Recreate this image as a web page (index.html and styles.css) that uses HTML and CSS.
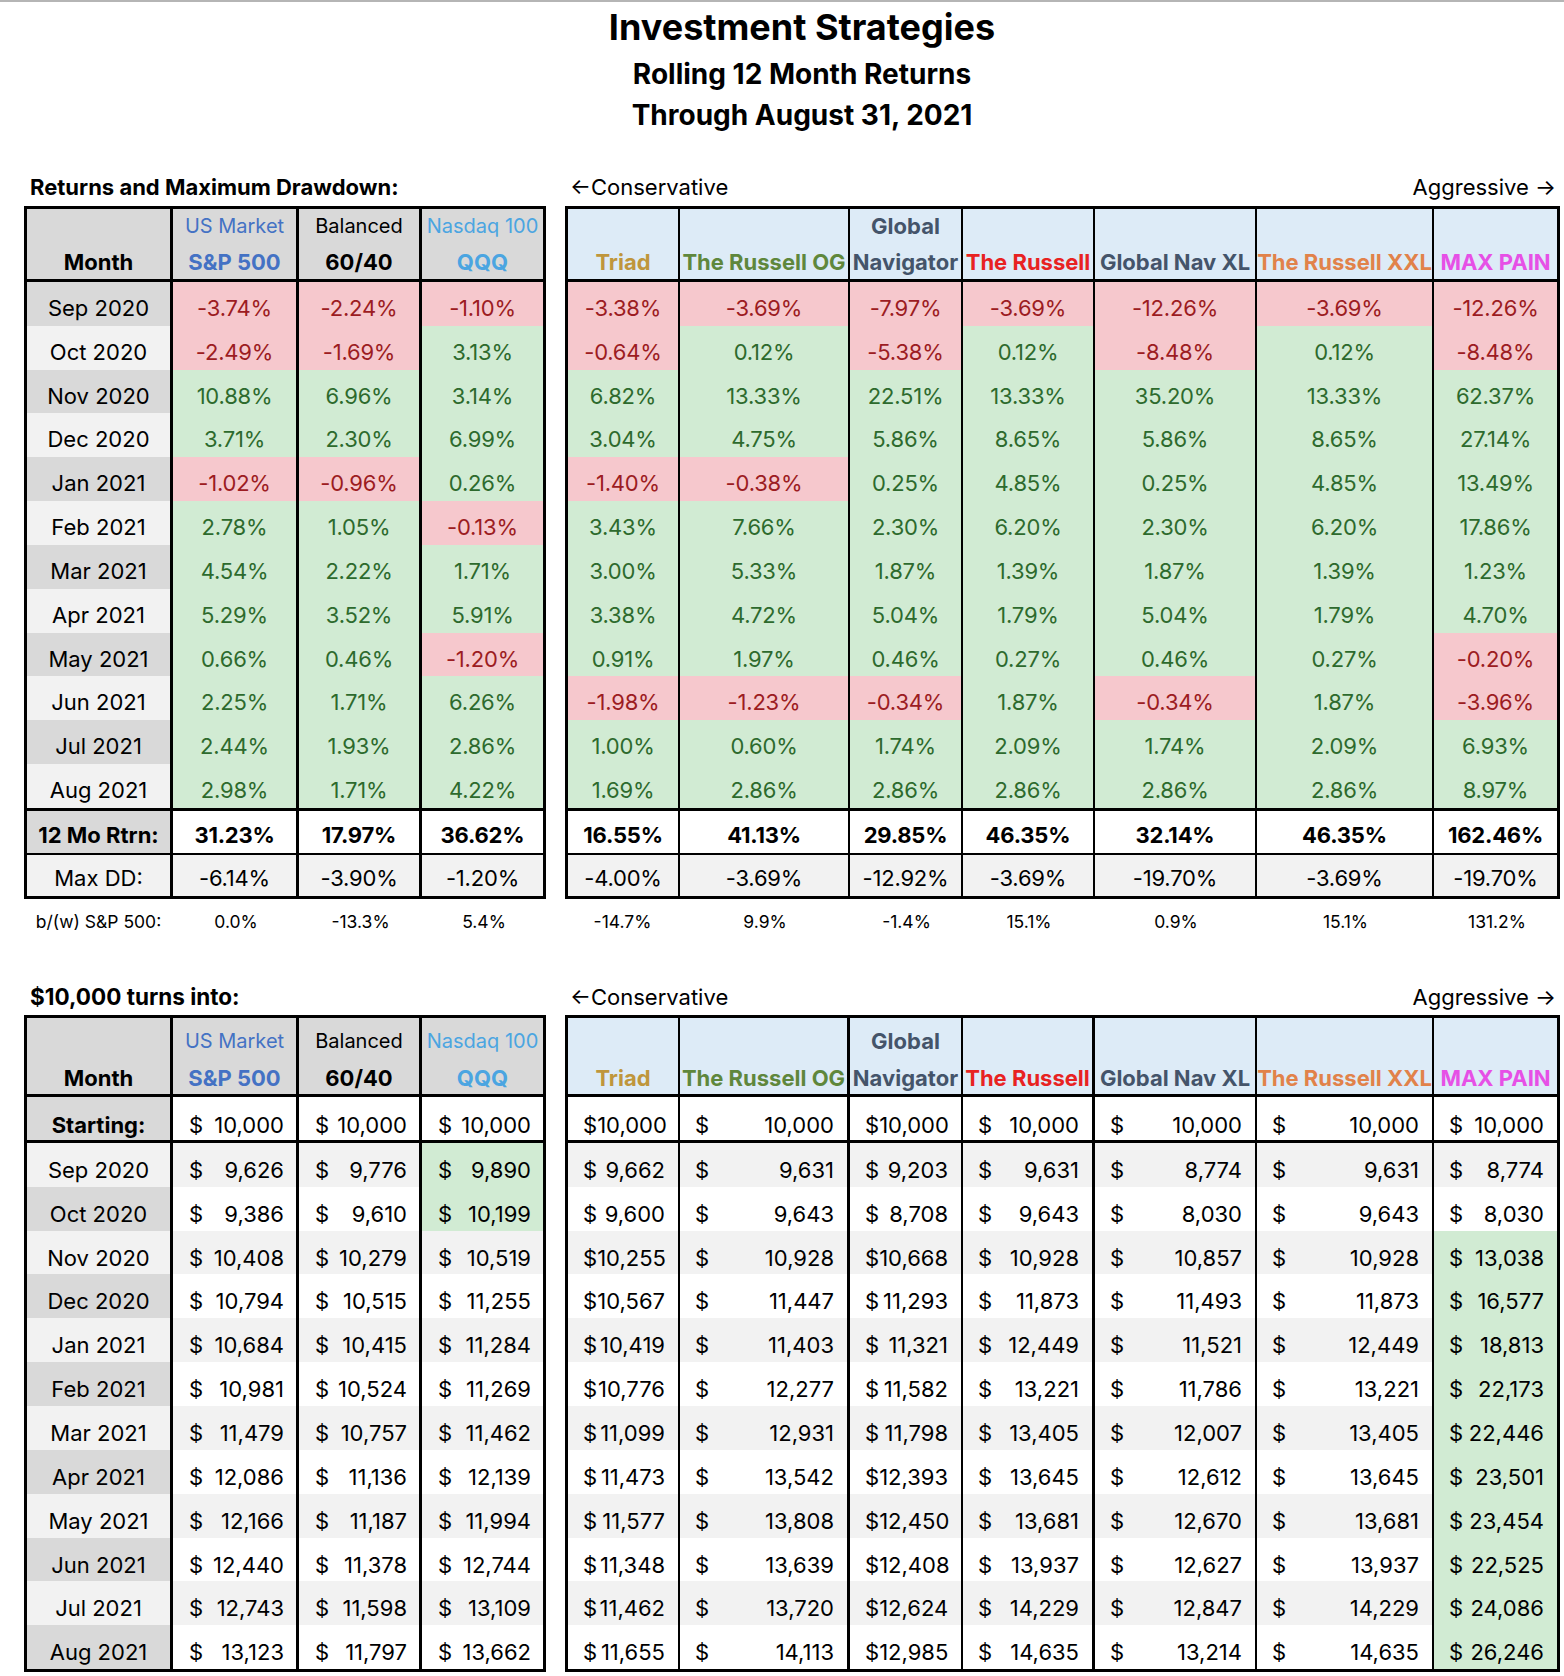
FILE: index.html
```html
<!DOCTYPE html>
<html lang="en">
<head>
<meta charset="utf-8">
<title>Investment Strategies</title>
<link rel="stylesheet" href="styles.css">
</head>
<body>
<div class="topline"></div>
<header class="titles">
  <h1>Investment Strategies</h1>
  <h2>Rolling 12 Month Returns</h2>
  <h2>Through August 31, 2021</h2>
</header>

<section class="sec s1">
  <div class="col-l">
    <div class="lab lab-l">Returns and Maximum Drawdown:</div>
    <table class="lt t1">
      <colgroup><col><col><col><col></colgroup>
      <thead>
        <tr><td><div class="l2">Month</div></td><td><div class="l1 c-sp">US Market</div><div class="l2 c-sp">S&amp;P 500</div></td><td><div class="l1">Balanced</div><div class="l2">60/40</div></td><td><div class="l1 c-q">Nasdaq 100</div><div class="l2 c-q">QQQ</div></td></tr>
      </thead>
      <tbody>
        <tr class="d"><td>Sep 2020</td><td class="r">-3.74%</td><td class="r">-2.24%</td><td class="r">-1.10%</td></tr>
        <tr class="d"><td>Oct 2020</td><td class="r">-2.49%</td><td class="r">-1.69%</td><td class="g">3.13%</td></tr>
        <tr class="d"><td>Nov 2020</td><td class="g">10.88%</td><td class="g">6.96%</td><td class="g">3.14%</td></tr>
        <tr class="d"><td>Dec 2020</td><td class="g">3.71%</td><td class="g">2.30%</td><td class="g">6.99%</td></tr>
        <tr class="d"><td>Jan 2021</td><td class="r">-1.02%</td><td class="r">-0.96%</td><td class="g">0.26%</td></tr>
        <tr class="d"><td>Feb 2021</td><td class="g">2.78%</td><td class="g">1.05%</td><td class="r">-0.13%</td></tr>
        <tr class="d"><td>Mar 2021</td><td class="g">4.54%</td><td class="g">2.22%</td><td class="g">1.71%</td></tr>
        <tr class="d"><td>Apr 2021</td><td class="g">5.29%</td><td class="g">3.52%</td><td class="g">5.91%</td></tr>
        <tr class="d"><td>May 2021</td><td class="g">0.66%</td><td class="g">0.46%</td><td class="r">-1.20%</td></tr>
        <tr class="d"><td>Jun 2021</td><td class="g">2.25%</td><td class="g">1.71%</td><td class="g">6.26%</td></tr>
        <tr class="d"><td>Jul 2021</td><td class="g">2.44%</td><td class="g">1.93%</td><td class="g">2.86%</td></tr>
        <tr class="d"><td>Aug 2021</td><td class="g">2.98%</td><td class="g">1.71%</td><td class="g">4.22%</td></tr>
        <tr class="tot"><td>12 Mo Rtrn:</td><td>31.23%</td><td>17.97%</td><td>36.62%</td></tr>
        <tr class="dd"><td>Max DD:</td><td>-6.14%</td><td>-3.90%</td><td>-1.20%</td></tr>
      </tbody>
      <tfoot>
        <tr class="bw"><td>b/(w) S&amp;P 500:</td><td>0.0%</td><td>-13.3%</td><td>5.4%</td></tr>
      </tfoot>
    </table>
  </div>
  <div class="col-r">
    <div class="lab lab-r"><span>←Conservative</span><span>Aggressive →</span></div>
    <table class="rt t1">
      <colgroup><col><col><col><col><col><col><col></colgroup>
      <thead>
        <tr><td><div class="l2 c-tri">Triad</div></td><td><div class="l2 c-og">The Russell OG</div></td><td><div class="l1 b c-gn">Global</div><div class="l2 c-gn">Navigator</div></td><td><div class="l2 c-ru">The Russell</div></td><td><div class="l2 c-gn">Global Nav XL</div></td><td><div class="l2 c-xxl">The Russell XXL</div></td><td><div class="l2 c-mp">MAX PAIN</div></td></tr>
      </thead>
      <tbody>
        <tr class="d"><td class="r">-3.38%</td><td class="r">-3.69%</td><td class="r">-7.97%</td><td class="r">-3.69%</td><td class="r">-12.26%</td><td class="r">-3.69%</td><td class="r">-12.26%</td></tr>
        <tr class="d"><td class="r">-0.64%</td><td class="g">0.12%</td><td class="r">-5.38%</td><td class="g">0.12%</td><td class="r">-8.48%</td><td class="g">0.12%</td><td class="r">-8.48%</td></tr>
        <tr class="d"><td class="g">6.82%</td><td class="g">13.33%</td><td class="g">22.51%</td><td class="g">13.33%</td><td class="g">35.20%</td><td class="g">13.33%</td><td class="g">62.37%</td></tr>
        <tr class="d"><td class="g">3.04%</td><td class="g">4.75%</td><td class="g">5.86%</td><td class="g">8.65%</td><td class="g">5.86%</td><td class="g">8.65%</td><td class="g">27.14%</td></tr>
        <tr class="d"><td class="r">-1.40%</td><td class="r">-0.38%</td><td class="g">0.25%</td><td class="g">4.85%</td><td class="g">0.25%</td><td class="g">4.85%</td><td class="g">13.49%</td></tr>
        <tr class="d"><td class="g">3.43%</td><td class="g">7.66%</td><td class="g">2.30%</td><td class="g">6.20%</td><td class="g">2.30%</td><td class="g">6.20%</td><td class="g">17.86%</td></tr>
        <tr class="d"><td class="g">3.00%</td><td class="g">5.33%</td><td class="g">1.87%</td><td class="g">1.39%</td><td class="g">1.87%</td><td class="g">1.39%</td><td class="g">1.23%</td></tr>
        <tr class="d"><td class="g">3.38%</td><td class="g">4.72%</td><td class="g">5.04%</td><td class="g">1.79%</td><td class="g">5.04%</td><td class="g">1.79%</td><td class="g">4.70%</td></tr>
        <tr class="d"><td class="g">0.91%</td><td class="g">1.97%</td><td class="g">0.46%</td><td class="g">0.27%</td><td class="g">0.46%</td><td class="g">0.27%</td><td class="r">-0.20%</td></tr>
        <tr class="d"><td class="r">-1.98%</td><td class="r">-1.23%</td><td class="r">-0.34%</td><td class="g">1.87%</td><td class="r">-0.34%</td><td class="g">1.87%</td><td class="r">-3.96%</td></tr>
        <tr class="d"><td class="g">1.00%</td><td class="g">0.60%</td><td class="g">1.74%</td><td class="g">2.09%</td><td class="g">1.74%</td><td class="g">2.09%</td><td class="g">6.93%</td></tr>
        <tr class="d"><td class="g">1.69%</td><td class="g">2.86%</td><td class="g">2.86%</td><td class="g">2.86%</td><td class="g">2.86%</td><td class="g">2.86%</td><td class="g">8.97%</td></tr>
        <tr class="tot"><td>16.55%</td><td>41.13%</td><td>29.85%</td><td>46.35%</td><td>32.14%</td><td>46.35%</td><td>162.46%</td></tr>
        <tr class="dd"><td>-4.00%</td><td>-3.69%</td><td>-12.92%</td><td>-3.69%</td><td>-19.70%</td><td>-3.69%</td><td>-19.70%</td></tr>
      </tbody>
      <tfoot>
        <tr class="bw"><td>-14.7%</td><td>9.9%</td><td>-1.4%</td><td>15.1%</td><td>0.9%</td><td>15.1%</td><td>131.2%</td></tr>
      </tfoot>
    </table>
  </div>
</section>

<section class="sec s2">
  <div class="col-l">
    <div class="lab lab-l">$10,000 turns into:</div>
    <table class="lt t2">
      <colgroup><col><col><col><col></colgroup>
      <thead>
        <tr><td><div class="l2">Month</div></td><td><div class="l1 c-sp">US Market</div><div class="l2 c-sp">S&amp;P 500</div></td><td><div class="l1">Balanced</div><div class="l2">60/40</div></td><td><div class="l1 c-q">Nasdaq 100</div><div class="l2 c-q">QQQ</div></td></tr>
      </thead>
      <tbody>
        <tr class="st"><td>Starting:</td><td><span>$</span>10,000</td><td><span>$</span>10,000</td><td><span>$</span>10,000</td></tr>
        <tr class="d"><td>Sep 2020</td><td><span>$</span>9,626</td><td><span>$</span>9,776</td><td class="g"><span>$</span>9,890</td></tr>
        <tr class="d"><td>Oct 2020</td><td><span>$</span>9,386</td><td><span>$</span>9,610</td><td class="g"><span>$</span>10,199</td></tr>
        <tr class="d"><td>Nov 2020</td><td><span>$</span>10,408</td><td><span>$</span>10,279</td><td><span>$</span>10,519</td></tr>
        <tr class="d"><td>Dec 2020</td><td><span>$</span>10,794</td><td><span>$</span>10,515</td><td><span>$</span>11,255</td></tr>
        <tr class="d"><td>Jan 2021</td><td><span>$</span>10,684</td><td><span>$</span>10,415</td><td><span>$</span>11,284</td></tr>
        <tr class="d"><td>Feb 2021</td><td><span>$</span>10,981</td><td><span>$</span>10,524</td><td><span>$</span>11,269</td></tr>
        <tr class="d"><td>Mar 2021</td><td><span>$</span>11,479</td><td><span>$</span>10,757</td><td><span>$</span>11,462</td></tr>
        <tr class="d"><td>Apr 2021</td><td><span>$</span>12,086</td><td><span>$</span>11,136</td><td><span>$</span>12,139</td></tr>
        <tr class="d"><td>May 2021</td><td><span>$</span>12,166</td><td><span>$</span>11,187</td><td><span>$</span>11,994</td></tr>
        <tr class="d"><td>Jun 2021</td><td><span>$</span>12,440</td><td><span>$</span>11,378</td><td><span>$</span>12,744</td></tr>
        <tr class="d"><td>Jul 2021</td><td><span>$</span>12,743</td><td><span>$</span>11,598</td><td><span>$</span>13,109</td></tr>
        <tr class="d last"><td>Aug 2021</td><td><span>$</span>13,123</td><td><span>$</span>11,797</td><td><span>$</span>13,662</td></tr>
      </tbody>
    </table>
  </div>
  <div class="col-r">
    <div class="lab lab-r"><span>←Conservative</span><span>Aggressive →</span></div>
    <table class="rt t2">
      <colgroup><col><col><col><col><col><col><col></colgroup>
      <thead>
        <tr><td><div class="l2 c-tri">Triad</div></td><td><div class="l2 c-og">The Russell OG</div></td><td><div class="l1 b c-gn">Global</div><div class="l2 c-gn">Navigator</div></td><td><div class="l2 c-ru">The Russell</div></td><td><div class="l2 c-gn">Global Nav XL</div></td><td><div class="l2 c-xxl">The Russell XXL</div></td><td><div class="l2 c-mp">MAX PAIN</div></td></tr>
      </thead>
      <tbody>
        <tr class="st"><td><span>$</span>10,000</td><td><span>$</span>10,000</td><td><span>$</span>10,000</td><td><span>$</span>10,000</td><td><span>$</span>10,000</td><td><span>$</span>10,000</td><td><span>$</span>10,000</td></tr>
        <tr class="d"><td><span>$</span>9,662</td><td><span>$</span>9,631</td><td><span>$</span>9,203</td><td><span>$</span>9,631</td><td><span>$</span>8,774</td><td><span>$</span>9,631</td><td><span>$</span>8,774</td></tr>
        <tr class="d"><td><span>$</span>9,600</td><td><span>$</span>9,643</td><td><span>$</span>8,708</td><td><span>$</span>9,643</td><td><span>$</span>8,030</td><td><span>$</span>9,643</td><td><span>$</span>8,030</td></tr>
        <tr class="d"><td><span>$</span>10,255</td><td><span>$</span>10,928</td><td><span>$</span>10,668</td><td><span>$</span>10,928</td><td><span>$</span>10,857</td><td><span>$</span>10,928</td><td class="g"><span>$</span>13,038</td></tr>
        <tr class="d"><td><span>$</span>10,567</td><td><span>$</span>11,447</td><td><span>$</span>11,293</td><td><span>$</span>11,873</td><td><span>$</span>11,493</td><td><span>$</span>11,873</td><td class="g"><span>$</span>16,577</td></tr>
        <tr class="d"><td><span>$</span>10,419</td><td><span>$</span>11,403</td><td><span>$</span>11,321</td><td><span>$</span>12,449</td><td><span>$</span>11,521</td><td><span>$</span>12,449</td><td class="g"><span>$</span>18,813</td></tr>
        <tr class="d"><td><span>$</span>10,776</td><td><span>$</span>12,277</td><td><span>$</span>11,582</td><td><span>$</span>13,221</td><td><span>$</span>11,786</td><td><span>$</span>13,221</td><td class="g"><span>$</span>22,173</td></tr>
        <tr class="d"><td><span>$</span>11,099</td><td><span>$</span>12,931</td><td><span>$</span>11,798</td><td><span>$</span>13,405</td><td><span>$</span>12,007</td><td><span>$</span>13,405</td><td class="g"><span>$</span>22,446</td></tr>
        <tr class="d"><td><span>$</span>11,473</td><td><span>$</span>13,542</td><td><span>$</span>12,393</td><td><span>$</span>13,645</td><td><span>$</span>12,612</td><td><span>$</span>13,645</td><td class="g"><span>$</span>23,501</td></tr>
        <tr class="d"><td><span>$</span>11,577</td><td><span>$</span>13,808</td><td><span>$</span>12,450</td><td><span>$</span>13,681</td><td><span>$</span>12,670</td><td><span>$</span>13,681</td><td class="g"><span>$</span>23,454</td></tr>
        <tr class="d"><td><span>$</span>11,348</td><td><span>$</span>13,639</td><td><span>$</span>12,408</td><td><span>$</span>13,937</td><td><span>$</span>12,627</td><td><span>$</span>13,937</td><td class="g"><span>$</span>22,525</td></tr>
        <tr class="d"><td><span>$</span>11,462</td><td><span>$</span>13,720</td><td><span>$</span>12,624</td><td><span>$</span>14,229</td><td><span>$</span>12,847</td><td><span>$</span>14,229</td><td class="g"><span>$</span>24,086</td></tr>
        <tr class="d last"><td><span>$</span>11,655</td><td><span>$</span>14,113</td><td><span>$</span>12,985</td><td><span>$</span>14,635</td><td><span>$</span>13,214</td><td><span>$</span>14,635</td><td class="g"><span>$</span>26,246</td></tr>
      </tbody>
    </table>
  </div>
</section>
</body>
</html>
```

FILE: styles.css
```css
* { box-sizing: border-box; }
html, body { margin: 0; padding: 0; background: #fff; }
body {
  width: 1564px;
  font-family: Inter, "Noto Sans", "Liberation Sans", sans-serif;
  color: #000;
}

.topline { height: 2px; background: #b5b5b5; }

.titles { text-align: center; padding-left: 40px; }
.titles h1 { margin: 3px 0 0; font-size: 36px; line-height: 44px; font-weight: 700; }
.titles h2 { margin: 0; font-size: 28px; line-height: 41px; font-weight: 700; }
.titles h1 + h2 { margin-top: 5px; }

.sec { display: flex; gap: 19px; padding-left: 24px; }
.s1 { margin-top: 37px; }
.s2 { margin-top: 48px; }
.col-l { width: 522px; flex: none; }
.col-r { width: 995px; flex: none; }

.lab { height: 28px; line-height: 28px; font-size: 22px; margin-bottom: 5px; white-space: nowrap; }
.s2 .lab { margin-bottom: 4px; }
.lab-l { font-weight: 700; padding-left: 6px; }
.s2 .lab-l { font-size: 22.5px; }
.lab-r { display: flex; justify-content: space-between; padding: 0 4px 0 5px; font-size: 22px; }

table { border-collapse: separate; border-spacing: 0; table-layout: fixed; width: 100%; }
td {
  padding: 13px 0 0;
  vertical-align: top;
  text-align: center;
  font-size: 22px;
  line-height: 26px;
  white-space: nowrap;
}

/* column widths */
.lt col:nth-child(1) { width: 149px; }
.lt col:nth-child(2) { width: 126px; }
.lt col:nth-child(3) { width: 123px; }
.lt col:nth-child(4) { width: 124px; }
.rt col:nth-child(1) { width: 115px; }
.rt col:nth-child(2) { width: 170px; }
.rt col:nth-child(3) { width: 113px; }
.rt col:nth-child(4) { width: 132px; }
.rt col:nth-child(5) { width: 162px; }
.rt col:nth-child(6) { width: 177px; }
.rt col:nth-child(7) { width: 126px; }

/* borders */
.lt thead td, .lt tbody td { border-right: 3px solid #000; }
.lt thead td:first-child, .lt tbody td:first-child { border-left: 3px solid #000; }
.rt thead td, .rt tbody td { border-right: 2px solid #000; }
.rt thead td:first-child, .rt tbody td:first-child { border-left: 3px solid #000; }
.rt thead td:last-child, .rt tbody td:last-child { border-right-width: 3px; }
.t2.rt thead td:nth-child(2), .t2.rt tbody td:nth-child(2),
.t2.rt thead td:nth-child(4), .t2.rt tbody td:nth-child(4) { border-right-width: 3px; }
thead td { border-top: 3px solid #000; border-bottom: 3px solid #000; }

/* header */
thead td { vertical-align: bottom; padding: 0 0 4px; }
.t1 thead tr { height: 76px; }
.t2 thead tr { height: 82px; }
.t2 thead td { padding-bottom: 3px; }
.lt thead td { background: #d9d9d9; }
.rt thead td { background: #ddebf7; }
.l1 { font-size: 20px; line-height: 26px; }
.l1.b { font-size: 22px; font-weight: 700; }
.l2 { font-size: 22px; line-height: 26px; font-weight: 700; margin-top: 10px; }
.t2 .l2 { margin-top: 11px; }

.c-sp { color: #4472c4; }
.c-q { color: #4ba5e1; }
.c-tri { color: #bf963c; }
.c-og { color: #5f873c; }
.c-gn { color: #44546a; }
.c-ru { color: #e82222; }
.c-xxl { color: #e1824a; }
.c-mp { color: #e650e6; }

/* table 1 body */
.t1 tr.d { height: 43.83px; }
.t1 tbody td { letter-spacing: -0.2px; }
.lt.t1 tbody tr:nth-child(odd) td:first-child { background: #d9d9d9; }
.lt.t1 tbody tr:nth-child(even) td:first-child { background: #f2f2f2; }
.lt.t1 tbody td:first-child { letter-spacing: 0; }
.r { background: #f6c8cd; color: #9c1c22; }
.g { background: #d1ebd3; color: #2d6a2d; }

.tot { height: 47px; }
.tot td { font-weight: 700; padding-top: 11px; border-top: 3px solid #000; border-bottom: 2px solid #000; background: #fff; }
.dd { height: 44px; }
.dd td { padding-top: 10px; border-bottom: 3px solid #000; background: #f2f2f2; }

.bw { height: 36px; }
.bw td { font-size: 17.5px; line-height: 24px; padding-top: 11px; }

/* table 2 body */
.t2 tbody td { text-align: right; padding: 14px 13px 0 15px; }
.lt.t2 tbody td { padding-right: 12px; padding-left: 16px; }
.t2 tbody td span { float: left; }
.lt.t2 tbody td:first-child { text-align: center; padding: 14px 0 0; }
.t2 tbody tr:nth-child(even) td { background: #f2f2f2; }
.lt.t2 tbody tr:nth-child(odd) td:first-child { background: #d9d9d9; }
.lt.t2 tbody tr:nth-child(even) td:first-child { background: #f2f2f2; }
.t2 tbody tr:nth-child(n) td.g { background: #d1ebd3; color: #000; }
.t2 tr.st { height: 46px; }
.t2 tr.st td { border-bottom: 3px solid #000; padding-top: 15px; }
.lt.t2 tr.st td:first-child { font-weight: 700; padding-top: 15px; }
.t2 tr.d { height: 43.85px; }
.t2 tr.d.last { height: 46.85px; }
.t2 tr.last td { border-bottom: 3px solid #000; }
```
